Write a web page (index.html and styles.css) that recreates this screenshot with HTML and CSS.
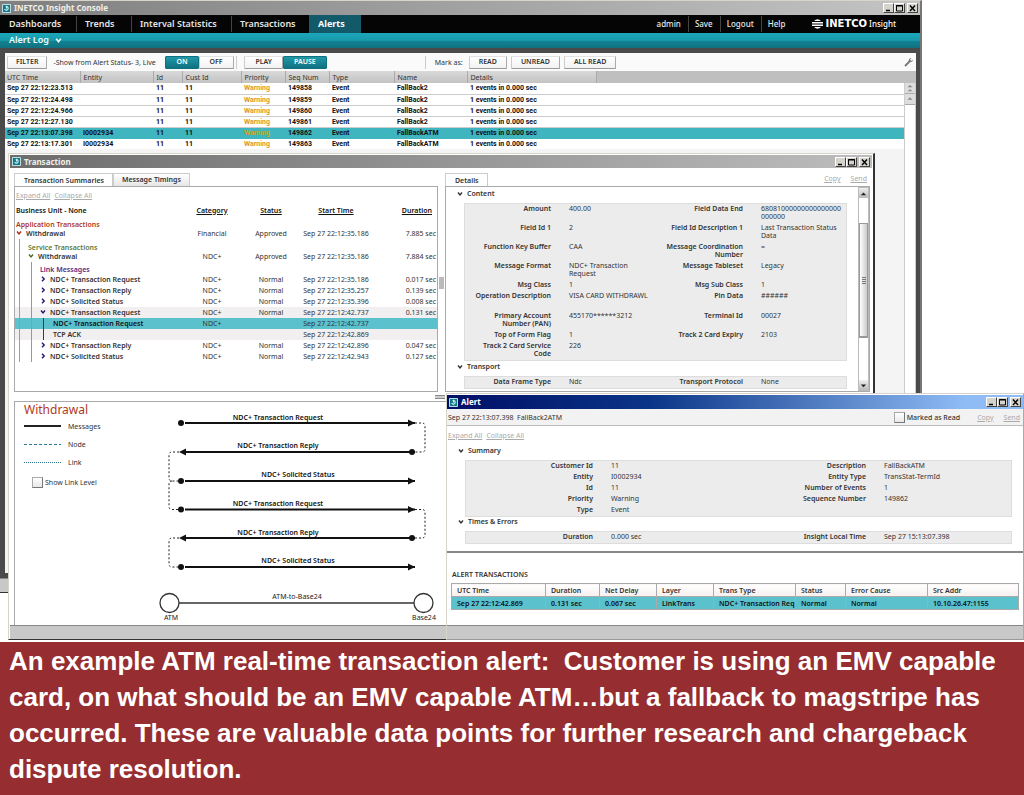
FILE: index.html
```html
<!DOCTYPE html>
<html lang="en">
<head>
<meta charset="utf-8">
<title>INETCO Insight Console</title>
<link rel="stylesheet" href="styles.css">
</head>
<body>
<svg class="defs" aria-hidden="true">
  <symbol id="app" viewBox="0 0 10 10"><rect width="10" height="10" rx="1" fill="#cfe9ec"/><rect x="1" y="1" width="8" height="8" fill="#157684"/><path d="M3 5.500a2 2 0 1 0 1-2.500M5 2v3" fill="none" stroke="#c9f3f5" stroke-width="1.200"/></symbol>
  <symbol id="min" viewBox="0 0 10 9"><path d="M2 6.500h4" stroke="#000" stroke-width="1.500"/></symbol>
  <symbol id="max" viewBox="0 0 10 9"><path d="M1.500 1.500h6v5.500h-6z M1 2h7" fill="none" stroke="#000"/></symbol>
  <symbol id="close" viewBox="0 0 10 9"><path d="M2 1.500l5 5.500M7 1.500l-5 5.500" stroke="#000" stroke-width="1.400"/></symbol>
  <symbol id="down" viewBox="0 0 6 6"><path d="M1 1.500l2 2.500 2-2.500" fill="none" stroke="currentColor" stroke-width="1.400"/></symbol>
  <symbol id="right" viewBox="0 0 6 6"><path d="M2 .8l2.200 2.200L2 5.200" fill="none" stroke="currentColor" stroke-width="1.400"/></symbol>
</svg>

<main class="desktop">
  <section class="window console" aria-label="INETCO Insight Console">
    <header class="titlebar">
      <svg class="app"><use href="#app"/></svg><h1>INETCO Insight Console</h1>
      <div class="controls"><button aria-label="Minimize"><svg><use href="#min"/></svg></button><button aria-label="Maximize"><svg><use href="#max"/></svg></button><button aria-label="Close"><svg><use href="#close"/></svg></button></div>
    </header>
    <nav class="nav">
      <a href="#">Dashboards</a><a href="#">Trends</a><a href="#">Interval Statistics</a><a href="#">Transactions</a><a href="#" class="active">Alerts</a>
      <div class="account"><a href="#">admin</a><a href="#">Save</a><a href="#">Logout</a><a href="#">Help</a></div>
      <div class="brand">
        <svg viewBox="0 0 11 10"><path d="M2 2Q5.500-1.500 9 2zM0 3h11v1.500H0zM0 5.500h11V7H0zM2 8Q5.500 11.500 9 8z" fill="#fff"/></svg>
        <b>INETCO</b><span>Insight</span>
      </div>
    </nav>
    <div class="subnav"><button>Alert Log <svg><use href="#down"/></svg></button></div>
    <div class="workspace">
      <div class="toolbar">
        <button class="btn">FILTER</button><span class="hint">-Show from Alert Status- 3, Live</span>
        <div class="group live"><button class="btn on">ON</button><button class="btn">OFF</button></div>
        <div class="group play"><button class="btn">PLAY</button><button class="btn on">PAUSE</button></div>
        <div class="mark"><span>Mark as:</span><button class="btn">READ</button><button class="btn">UNREAD</button><button class="btn">ALL READ</button></div>
        <button class="wrench" aria-label="Settings"><svg viewBox="0 0 10 10"><path d="M1 9L6 4" stroke="#777" stroke-width="1.800"/><path d="M9 2.500L7.500 4 6 2.500 7.500 1A2.500 2.500 0 0 0 5 4.500L7 5A2.500 2.500 0 0 0 9 2.500z" fill="#777"/></svg></button>
      </div>
      <div class="log-area">
        <table class="log">
          <colgroup><col class="c-time"><col class="c-entity"><col class="c-id"><col class="c-cust"><col class="c-pri"><col class="c-seq"><col class="c-type"><col class="c-name"><col class="c-det"><col></colgroup>
          <thead><tr><th>UTC Time</th><th>Entity</th><th>Id</th><th>Cust Id</th><th>Priority</th><th>Seq Num</th><th>Type</th><th>Name</th><th>Details</th><th class="blank"></th></tr></thead>
          <tbody>
            <tr><td>Sep 27 22:12:23.513</td><td></td><td>11</td><td>11</td><td class="warn">Warning</td><td>149858</td><td>Event</td><td>FallBack2</td><td colspan="2">1 events in 0.000 sec</td></tr>
            <tr><td>Sep 27 22:12:24.498</td><td></td><td>11</td><td>11</td><td class="warn">Warning</td><td>149859</td><td>Event</td><td>FallBack2</td><td colspan="2">1 events in 0.000 sec</td></tr>
            <tr><td>Sep 27 22:12:24.966</td><td></td><td>11</td><td>11</td><td class="warn">Warning</td><td>149860</td><td>Event</td><td>FallBack2</td><td colspan="2">1 events in 0.000 sec</td></tr>
            <tr><td>Sep 27 22:12:27.130</td><td></td><td>11</td><td>11</td><td class="warn">Warning</td><td>149861</td><td>Event</td><td>FallBack2</td><td colspan="2">1 events in 0.000 sec</td></tr>
            <tr class="selected"><td>Sep 27 22:13:07.398</td><td>I0002934</td><td>11</td><td>11</td><td class="warn">Warning</td><td>149862</td><td>Event</td><td>FallBackATM</td><td colspan="2">1 events in 0.000 sec</td></tr>
            <tr><td>Sep 27 22:13:17.301</td><td>I0002934</td><td>11</td><td>11</td><td class="warn">Warning</td><td>149863</td><td>Event</td><td>FallBackATM</td><td colspan="2">1 events in 0.000 sec</td></tr>
          </tbody>
        </table>
        <div class="log-scroll">
          <button aria-label="Scroll to top"><svg viewBox="0 0 12 12"><path d="M3 5l3-2.500L9 5zM3 10l3-2.500L9 10z" fill="#888"/></svg></button>
          <button aria-label="Scroll up"><svg viewBox="0 0 12 12"><path d="M3 7l3-3 3 3z" fill="#888"/></svg></button>
        </div>
      </div>
    </div>
    <div class="statusbar"></div>
  </section>

  <section class="window transaction" aria-label="Transaction">
    <header class="titlebar">
      <svg class="app"><use href="#app"/></svg><h2>Transaction</h2>
      <div class="controls"><button aria-label="Minimize"><svg><use href="#min"/></svg></button><button aria-label="Maximize"><svg><use href="#max"/></svg></button><button aria-label="Close"><svg><use href="#close"/></svg></button></div>
    </header>
    <div class="panes">
      <div class="pane">
        <div class="tabs"><button class="tab current">Transaction Summaries</button><button class="tab">Message Timings</button></div>
        <div class="panel summaries">
          <div class="links"><a href="#">Expand All</a><a href="#">Collapse All</a></div>
          <table class="tree">
            <colgroup><col><col class="c-cat"><col class="c-stat"><col class="c-start"><col class="c-dur"></colgroup>
            <thead><tr><th>Business Unit - None</th><th><u>Category</u></th><th><u>Status</u></th><th><u>Start Time</u></th><th><u>Duration</u></th></tr></thead>
            <tbody>
              <tr class="kind app-kind"><td colspan="5">Application Transactions</td></tr>
              <tr class="parent"><td class="red"><svg><use href="#down"/></svg>Withdrawal</td><td>Financial</td><td>Approved</td><td>Sep 27 22:12:35.186</td><td>7.885 sec</td></tr>
              <tr class="kind svc-kind"><td colspan="5" class="in1">Service Transactions</td></tr>
              <tr class="parent"><td class="in1 green"><svg><use href="#down"/></svg>Withdrawal</td><td>NDC+</td><td>Approved</td><td>Sep 27 22:12:35.186</td><td>7.884 sec</td></tr>
              <tr class="kind link-kind"><td colspan="5" class="in2">Link Messages</td></tr>
              <tr><td class="in2"><svg><use href="#right"/></svg>NDC+ Transaction Request</td><td>NDC+</td><td>Normal</td><td>Sep 27 22:12:35.186</td><td>0.017 sec</td></tr>
              <tr><td class="in2"><svg><use href="#right"/></svg>NDC+ Transaction Reply</td><td>NDC+</td><td>Normal</td><td>Sep 27 22:12:35.257</td><td>0.139 sec</td></tr>
              <tr><td class="in2"><svg><use href="#right"/></svg>NDC+ Solicited Status</td><td>NDC+</td><td>Normal</td><td>Sep 27 22:12:35.396</td><td>0.008 sec</td></tr>
              <tr class="open"><td class="in2"><svg><use href="#down"/></svg>NDC+ Transaction Request</td><td>NDC+</td><td>Normal</td><td>Sep 27 22:12:42.737</td><td>0.131 sec</td></tr>
              <tr class="selected"><td class="in3">NDC+ Transaction Request</td><td>NDC+</td><td></td><td>Sep 27 22:12:42.737</td><td></td></tr>
              <tr class="open"><td class="in3">TCP ACK</td><td></td><td></td><td>Sep 27 22:12:42.869</td><td></td></tr>
              <tr><td class="in2"><svg><use href="#right"/></svg>NDC+ Transaction Reply</td><td>NDC+</td><td>Normal</td><td>Sep 27 22:12:42.896</td><td>0.047 sec</td></tr>
              <tr><td class="in2"><svg><use href="#right"/></svg>NDC+ Solicited Status</td><td>NDC+</td><td>Normal</td><td>Sep 27 22:12:42.943</td><td>0.127 sec</td></tr>
            </tbody>
          </table>
        </div>
      </div>
      <div class="splitter"></div>
      <div class="pane details-pane">
        <div class="tabs"><button class="tab current">Details</button><div class="links"><a href="#">Copy</a><a href="#">Send</a></div></div>
        <div class="panel details">
          <div class="details-body">
            <h3><svg><use href="#down"/></svg>Content</h3>
            <dl class="facts content-facts">
              <dt>Amount</dt><dd>400.00</dd><dt>Field Data End</dt><dd>68081000000000000000<wbr>000000</dd>
              <dt>Field Id 1</dt><dd>2</dd><dt>Field Id Description 1</dt><dd>Last Transaction Status Data</dd>
              <dt>Function Key Buffer</dt><dd>CAA</dd><dt>Message Coordination Number</dt><dd>=</dd>
              <dt>Message Format</dt><dd>NDC+ Transaction Request</dd><dt>Message Tableset</dt><dd>Legacy</dd>
              <dt>Msg Class</dt><dd>1</dd><dt>Msg Sub Class</dt><dd>1</dd>
              <dt class="tall">Operation Description</dt><dd>VISA CARD WITHDRAWL</dd><dt>Pin Data</dt><dd>######</dd>
              <dt>Primary Account Number (PAN)</dt><dd>455170******3212</dd><dt>Terminal Id</dt><dd>00027</dd>
              <dt>Top of Form Flag</dt><dd>1</dd><dt>Track 2 Card Expiry</dt><dd>2103</dd>
              <dt>Track 2 Card Service Code</dt><dd>226</dd>
            </dl>
            <h3><svg><use href="#down"/></svg>Transport</h3>
            <dl class="facts content-facts"><dt>Data Frame Type</dt><dd>Ndc</dd><dt>Transport Protocol</dt><dd>None</dd></dl>
          </div>
          <div class="scrollbar"><button aria-label="Scroll up"><svg viewBox="0 0 10 10"><path d="M2 7l3-3 3 3z" fill="#222"/></svg></button><div class="track"><div class="thumb"><i></i></div></div><button aria-label="Scroll down"><svg viewBox="0 0 10 10"><path d="M2 4l3 3 3-3z" fill="#222"/></svg></button></div>
        </div>
      </div>
    </div>
    <div class="row-splitter"><i></i></div>
    <div class="panel flow">
      <div class="legend">
        <h3>Withdrawal</h3>
        <ul>
          <li><i class="solid"></i>Messages</li>
          <li><i class="dashed"></i>Node</li>
          <li><i class="dotted"></i>Link</li>
        </ul>
        <label><input type="checkbox">Show Link Level</label>
      </div>
      <svg class="diagram" viewBox="0 0 290 222" role="img" aria-label="Message flow between ATM and Base24">
        <g stroke="#111" stroke-width="2">
          <path d="M30 21H260M30 50H260M30 79H260M30 107.500H260M30 136H260M30 165H260"/>
        </g>
        <g fill="#111">
          <circle cx="26" cy="21" r="3"/><circle cx="257" cy="50" r="3"/><circle cx="26" cy="79" r="3"/><circle cx="26" cy="107.500" r="3"/><circle cx="257" cy="136" r="3"/><circle cx="26" cy="165" r="3"/>
          <path d="M253 17.500l7 3.500-7 3.500zM253 75.500l7 3.500-7 3.500zM253 104l7 3.500-7 3.500zM253 161.500l7 3.500-7 3.500zM31 46.500L24 50l7 3.500zM31 132.500L24 136l7 3.500z"/>
        </g>
        <g fill="none" stroke="#222" stroke-dasharray="2 2">
          <path d="M260 21h7q3 0 3 3v23q0 3-3 3h-7M24 50h-7q-3 0-3 3v23q0 3 3 3h7M17 79q-3 0-3 3v22.500q0 3 3 3h7M260 107.500h7q3 0 3 3V133q0 3-3 3h-7M24 136h-7q-3 0-3 3v23q0 3 3 3h7"/>
        </g>
        <g class="msg"><text x="123" y="18">NDC+ Transaction Request</text><text x="123" y="46">NDC+ Transaction Reply</text><text x="143" y="75">NDC+ Solicited Status</text><text x="123" y="104">NDC+ Transaction Request</text><text x="123" y="133">NDC+ Transaction Reply</text><text x="143" y="161">NDC+ Solicited Status</text></g>
        <g fill="#fff" stroke="#333" stroke-width="1.300"><path d="M24 201H259"/><circle cx="14.500" cy="201" r="9.500"/><circle cx="268.500" cy="201" r="9.500"/></g>
        <g class="node"><text x="142" y="197">ATM-to-Base24</text><text x="16" y="218">ATM</text><text x="269" y="218">Base24</text></g>
      </svg>
    </div>
    <div class="statusbar"></div>
  </section>

  <section class="window alert" aria-label="Alert">
    <header class="titlebar blue">
      <svg class="app"><use href="#app"/></svg><h2>Alert</h2>
      <div class="controls"><button aria-label="Minimize"><svg><use href="#min"/></svg></button><button aria-label="Maximize"><svg><use href="#max"/></svg></button><button aria-label="Close"><svg><use href="#close"/></svg></button></div>
    </header>
    <div class="alert-head"><span>Sep 27 22:13:07.398&nbsp; FallBack2ATM</span><label><input type="checkbox">Marked as Read</label><div class="links"><a href="#">Copy</a><a href="#">Send</a></div></div>
    <div class="alert-body">
      <div class="links"><a href="#">Expand All</a><a href="#">Collapse All</a></div>
      <h3><svg><use href="#down"/></svg>Summary</h3>
      <dl class="facts alert-facts">
        <dt>Customer Id</dt><dd>11</dd><dt>Description</dt><dd>FallBackATM</dd>
        <dt>Entity</dt><dd>I0002934</dd><dt>Entity Type</dt><dd>TransStat-TermId</dd>
        <dt>Id</dt><dd>11</dd><dt>Number of Events</dt><dd>1</dd>
        <dt>Priority</dt><dd>Warning</dd><dt>Sequence Number</dt><dd>149862</dd>
        <dt>Type</dt><dd>Event</dd>
      </dl>
      <h3><svg><use href="#down"/></svg>Times &amp; Errors</h3>
      <dl class="facts alert-facts"><dt>Duration</dt><dd>0.000 sec</dd><dt>Insight Local Time</dt><dd>Sep 27 15:13:07.398</dd></dl>
    </div>
    <div class="alert-trans">
      <h3>ALERT TRANSACTIONS</h3>
      <table>
        <colgroup><col class="a-time"><col class="a-dur"><col class="a-net"><col class="a-net"><col class="a-type"><col class="a-stat"><col class="a-type"><col></colgroup>
        <thead><tr><th>UTC Time</th><th>Duration</th><th>Net Delay</th><th>Layer</th><th>Trans Type</th><th>Status</th><th>Error Cause</th><th>Src Addr</th></tr></thead>
        <tbody><tr><td>Sep 27 22:12:42.869</td><td>0.131 sec</td><td>0.067 sec</td><td>LinkTrans</td><td>NDC+ Transaction Req</td><td>Normal</td><td>Normal</td><td>10.10.26.47:1155</td></tr></tbody>
      </table>
    </div>
    <div class="statusbar"></div>
  </section>
</main>
<p class="caption">An example ATM real-time transaction alert:&nbsp; Customer is using an EMV capable card, on what should be an EMV capable ATM…but a fallback to magstripe has occurred. These are valuable data points for further research and chargeback dispute resolution.</p>
</body>
</html>
```

FILE: styles.css
```css
* { box-sizing: border-box; }
body { margin: 0; min-height: 100vh; display: flex; flex-direction: column; background: #fff; color: #333; font: 7px/11px "Noto Sans", "Open Sans", sans-serif; }
h1, h2, h3, p, dl, dd, ul { margin: 0; padding: 0; }
h1, h2, h3 { font-size: inherit; }
ul { list-style: none; }
button { margin: 0; padding: 0; border: 0; background: none; color: inherit; font: inherit; }
a { color: inherit; text-decoration: none; }
svg { display: block; flex: none; }
table { width: 100%; border-collapse: collapse; table-layout: fixed; }
th, td { padding: 0; text-align: left; white-space: nowrap; }
.defs { display: none; }

/* Overlapping windows share one grid cell and are offset by their margins. */
.desktop { display: grid; }
.window { grid-area: 1 / 1; display: flex; flex-direction: column; min-width: 0; background: #fff; border: 1px solid #d8d4cc; border-right-color: #333; border-bottom-color: #333; }
.console { margin: 0 102px 48px 0; border-left: 0; border-right: 2px solid #777; }
.transaction { margin: 153px 149px 1px 8px; padding: 1px 1px 0; border-right-width: 2px; }
.alert { margin: 393px 0 1px 446px; padding-top: 1px; border-right-color: #aaa; border-bottom-color: #999; }

.titlebar { display: flex; align-items: center; height: 14px; padding: 0 2px; gap: 3px; background: linear-gradient(90deg, #7f7f7f, #c4c4c4); color: #f2efe8; font: bold 8px/12px "Noto Sans", sans-serif; }
.transaction .titlebar { height: 13px; background: linear-gradient(90deg, #6c6c6c, #bdbdbd); }
.titlebar.blue { background: linear-gradient(90deg, #000f66, #0a3487 35%, #8fbcf5 90%); color: #fff; }
.app { width: 9px; height: 9px; }
.controls { display: flex; margin-left: auto; }
.controls button { width: 11px; height: 10px; background: #d6d3cc; border: 1px solid; border-color: #fff #444 #444 #fff; }
.controls button:last-child { margin-left: 2px; }
.controls svg { width: 10px; height: 9px; }

.nav { display: flex; align-items: center; height: 18px; background: #050505; color: #e6e6e6; font: 600 9px/16px "Noto Sans", sans-serif; }
.nav > a { padding: 0 8px; border-right: 1px solid #444; height: 16px; }
.nav > a:first-child { width: 77px; padding-left: 9px; }
.nav > a:nth-child(2) { width: 55px; }
.nav > a:nth-child(3) { width: 100px; }
.nav > a:nth-child(4) { width: 77px; border: 0; }
.nav > a.active { height: 18px; width: 52px; padding-left: 9px; border: 0; background: #12596a; color: #fff; font-weight: bold; line-height: 18px; }
.account { display: flex; margin-left: auto; font-size: 8px; font-weight: 500; }
.account a { padding: 0 7px 0 6px; border-right: 1px solid #444; }
.account a:last-child { border: 0; }
.brand { display: flex; align-items: center; gap: 2px; margin: 0 24px 0 20px; color: #fff; font-size: 8px; }
.brand svg { width: 11px; height: 10px; }
.brand b { font: bold 10px/16px "DejaVu Sans", sans-serif; }
.brand span { font-weight: 500; }

.subnav { height: 15px; background: linear-gradient(#1ba8bb, #1899aa 50%, #118292 55%, #11707e); color: #eefcfd; font: 600 9px/14px "Noto Sans", sans-serif; }
.subnav button { display: flex; align-items: center; gap: 6px; padding-left: 9px; }
.subnav svg { width: 7px; height: 7px; }
.workspace { flex: 1; display: flex; flex-direction: column; padding: 5px 4px 5px 5px; background: #4a4a4a; }
.workspace > div { background: #fafafa; }
.toolbar { display: flex; align-items: center; height: 18px; padding: 0 2px; }
.btn { height: 13px; padding: 0 8px; border: 1px solid; border-color: #e2e2e2 #aaa #999 #ccc; border-radius: 1px; background: linear-gradient(#fff, #f2f2f2); color: #333; font: 600 7px/10px "Noto Sans", sans-serif; white-space: nowrap; }
.btn.on { background: linear-gradient(#2199a9, #0f7180); border-color: #0f7180; color: #fff; }
.hint { width: 118px; padding-left: 6px; white-space: nowrap; }
.group { display: flex; }
.group .btn { padding: 0 10px; }
.group.live { width: 72px; border-right: 1px solid #ccc; }
.group.play { margin-left: 7px; }
.mark { display: flex; align-items: center; gap: 4px; margin-left: 98px; padding-left: 9px; border-left: 1px solid #ccc; }
.mark span { margin-right: 2px; white-space: nowrap; }
.mark .btn { padding: 0 9px; }
.wrench { margin-left: auto; }
.wrench svg { width: 10px; height: 10px; }

.workspace > .log-area { flex: 1; display: flex; align-items: stretch; background: linear-gradient(#bfbfbf 12px, #f4f4f4 12px); }
.log { align-self: flex-start; flex: 1; }
.log col.c-time { width: 75px; } .log col.c-entity { width: 73px; } .log col.c-id { width: 29px; } .log col.c-cust { width: 59px; }
.log col.c-pri, .log col.c-seq { width: 44px; } .log col.c-type { width: 65px; } .log col.c-name { width: 73px; } .log col.c-det { width: 129px; }
.log th { height: 12px; padding: 0 2px; background: linear-gradient(#d9d9d9, #c3c3c3); border-right: 1px solid #aaa; font-weight: 400; }
.log th.blank { background: #bfbfbf; border: 0; }
.log td { height: 11px; padding: 0 2px; border-bottom: 1px solid #ccc; background: #fff; color: #111; font: bold 7px/10px Roboto, "Noto Sans", sans-serif; }
.log td:not(:first-child), .log th:not(:first-child) { padding-left: 3px; }
.log tr:last-child td { border: 0; }
.log td.warn { color: #d99a2b; }
.log .selected td { background: #3fb5c0; border-color: #3fb5c0; }
.log-scroll { width: 12px; margin-top: 12px; border: solid #ccc; border-width: 0 1px; background: #fff; }
.log-scroll button { display: block; width: 100%; background: #ddd; border-bottom: 1px solid #aaa; }

.statusbar { height: 14px; background: #c8c8c8; border-top: 1px solid #888; }

.links { display: flex; gap: 4px; color: #aaa; }
.links a { text-decoration: underline; white-space: nowrap; }
.panes { display: flex; padding: 5px 2px 0 4px; }
.pane { flex: none; width: 424px; }
.details-pane { flex: 1; width: auto; min-width: 0; }
.splitter { width: 7px; display: flex; align-items: center; justify-content: center; }
.splitter::before { content: ""; width: 5px; height: 12px; background: #bbb; }
.tabs { display: flex; height: 13px; }
.tab { padding: 0 8px; border: 1px solid #ccc; border-bottom: 0; background: linear-gradient(#fff, #e6e6e6); font-weight: 600; line-height: 10px; white-space: nowrap; }
.tab.current { padding-left: 9px; background: #fff; line-height: 11px; }
.tabs .links { margin-left: auto; gap: 10px; padding-right: 3px; }
.panel { border: 1px solid #aaa; background: #fff; }
.summaries { height: 206px; padding-top: 3px; overflow: hidden; }
.summaries .links { padding-left: 1px; }
.tree { margin-top: 3px; }
.tree col.c-cat { width: 60px; } .tree col.c-stat { width: 58px; } .tree col.c-start { width: 72px; } .tree col.c-dur { width: 65px; }
.tree th { height: 12px; font-weight: 600; color: #111; }
.tree th, .tree td { text-align: center; }
.tree th:first-child { padding-left: 1px; }
.tree th:first-child, .tree td:first-child { text-align: left; }
.tree th:last-child, .tree td:last-child { padding-right: 1px; text-align: right; }
.tree th:last-child { padding-right: 5px; }
.tree td { height: 11px; line-height: 10px; }
.tree td:first-child { font-weight: 600; }
.tree td svg { display: inline-block; width: 6px; height: 6px; margin-right: 4px; color: #2b1470; }
.tree .parent td { height: 10px; line-height: 10px; }
.tree .kind td { height: 13px; padding: 4px 0 0 1px; text-align: left; line-height: 9px; }
.tree .link-kind td { height: 12px; line-height: 8px; }
.tree td.red { padding-left: 1px; }
.tree .red svg { color: #a8321a; }
.tree .green svg { color: #4d6b25; }
.tree .app-kind td { color: #b0391c; }
.tree .svc-kind td { color: #5d7a3a; }
.tree .link-kind td { color: #562a82; }
.tree td.in1, .tree .kind td.in1 { padding-left: 13px; background: linear-gradient(#c98b7c, #c98b7c) 4px 0 / 1px 100% no-repeat; }
.tree td.in2, .tree .kind td.in2 { padding-left: 25px; background: linear-gradient(#c98b7c, #c98b7c) 4px 0 / 1px 100% no-repeat, linear-gradient(#8fa56a, #8fa56a) 16px 0 / 1px 100% no-repeat; }
.tree td.in3 { padding-left: 38px; background: linear-gradient(#c98b7c, #c98b7c) 4px 0 / 1px 100% no-repeat, linear-gradient(#8fa56a, #8fa56a) 16px 0 / 1px 100% no-repeat, linear-gradient(#4a2a80, #4a2a80) 28px 0 / 1px 100% no-repeat; }
.tree .open { background: #f1efef; }
.tree .selected { background: #5bc2cd; }
.tree .selected td:first-child { color: #111; }

.details { display: flex; height: 206px; overflow: hidden; }
.details-body { flex: 1; padding: 1px 11px 0 18px; }
h3 { display: flex; align-items: center; font-weight: 600; }
h3 svg { width: 6px; height: 6px; margin: 0 4px 0 -7px; }
.details h3 { margin-bottom: 4px; }
.facts { display: grid; background: #ececec; border: 1px solid #ddd; line-height: 8px; }
.facts dt { text-align: right; font-weight: 600; }
.facts dt, .facts dd { padding: 1px 0 2px; }
.facts dd { padding-left: 18px; }
.content-facts { grid-template-columns: 86px 103px minmax(0, 1fr) 103px; }
.content-facts dt { padding-left: 8px; }
.content-facts .tall { min-height: 20px; }
.scrollbar { display: flex; flex-direction: column; width: 11px; background: #ddd; border: 1px solid #bbb; }
.scrollbar button { height: 10px; background: linear-gradient(#eee, #bbb); }
.track { flex: 1; padding: 25px 0 42px; background: #fff; }
.thumb { height: 100%; display: flex; align-items: center; justify-content: center; border: solid #999; border-width: 1px 1px 2px; background: linear-gradient(90deg, #fff, #ccc); }
.thumb i { width: 4px; height: 7px; background: repeating-linear-gradient(#777 0 1px, transparent 1px 2px); }
.row-splitter { height: 9px; }
.row-splitter i { display: block; width: 10px; height: 4px; margin: 3px 0 0 425px; background: #ccc; border: solid #888; border-width: 1px 0; }

.flow { display: flex; height: 224px; margin-left: 4px; border-right: 0; border-bottom: 0; }
.legend { width: 140px; padding-left: 9px; }
.legend h3 { color: #b0391c; font: 12px/15px "Noto Sans", sans-serif; }
.legend li { display: flex; align-items: center; height: 18px; }
.legend li i { width: 37px; margin-right: 7px; border-top: 2px solid #222; }
.legend li i.dashed { height: 1px; border: 0; background: repeating-linear-gradient(90deg, #2a7894 0 3px, transparent 3px 5px); }
.legend li i.dotted { border-top: 1px dotted #2a7894; }
label { display: flex; align-items: center; white-space: nowrap; }
input[type="checkbox"] { appearance: none; width: 11px; height: 11px; margin: 0 2px 0 0; border: 1px solid; border-color: #aaa #777 #777 #aaa; background: linear-gradient(#fff, #e8e8e8); }
.legend label { margin: 6px 0 0 8px; }
.diagram { width: 290px; height: 222px; }
.diagram text { text-anchor: middle; font-size: 7px; fill: #222; }
.diagram .msg text { font-weight: 600; fill: #111; }

.alert-head { display: flex; align-items: center; height: 17px; padding: 0 3px 0 1px; background: #f2f2f2; border-bottom: 1px solid #bbb; }
.alert-head label { margin-left: auto; font-weight: 500; }
.alert-head .links { gap: 10px; margin-left: 17px; }
.alert-body { padding: 4px 11px 7px 18px; border-bottom: 2px solid #888; }
.alert-body > .links { margin: 0 0 4px -17px; }
.alert-body h3 { margin-bottom: 4px; }
.alert-body dl + h3 { margin-top: -1px; }
.alert-facts { grid-template-columns: 127px minmax(0, 1fr) 98px 145px; }
.alert-trans { flex: 1; padding: 16px 4px 14px 4px; }
.alert-trans h3 { margin: 0 0 3px 1px; }
.alert-trans th, .alert-trans td { height: 13px; padding-left: 5px; border: 1px solid #aaa; font-weight: 600; overflow: hidden; }
.alert-trans th { background: linear-gradient(#fff, #f6efee); }
.alert-trans td { background: #5bc2cd; color: #111; }
.a-time { width: 94px; } .a-dur { width: 54px; } .a-net { width: 57px; } .a-type { width: 82px; } .a-stat { width: 50px; }

.caption { flex: 1; margin-top: 1px; padding: 1px 9px 8px; background: #962d31; color: #fff; font: bold 26px/36px "Liberation Sans", Arial, sans-serif; }
```
